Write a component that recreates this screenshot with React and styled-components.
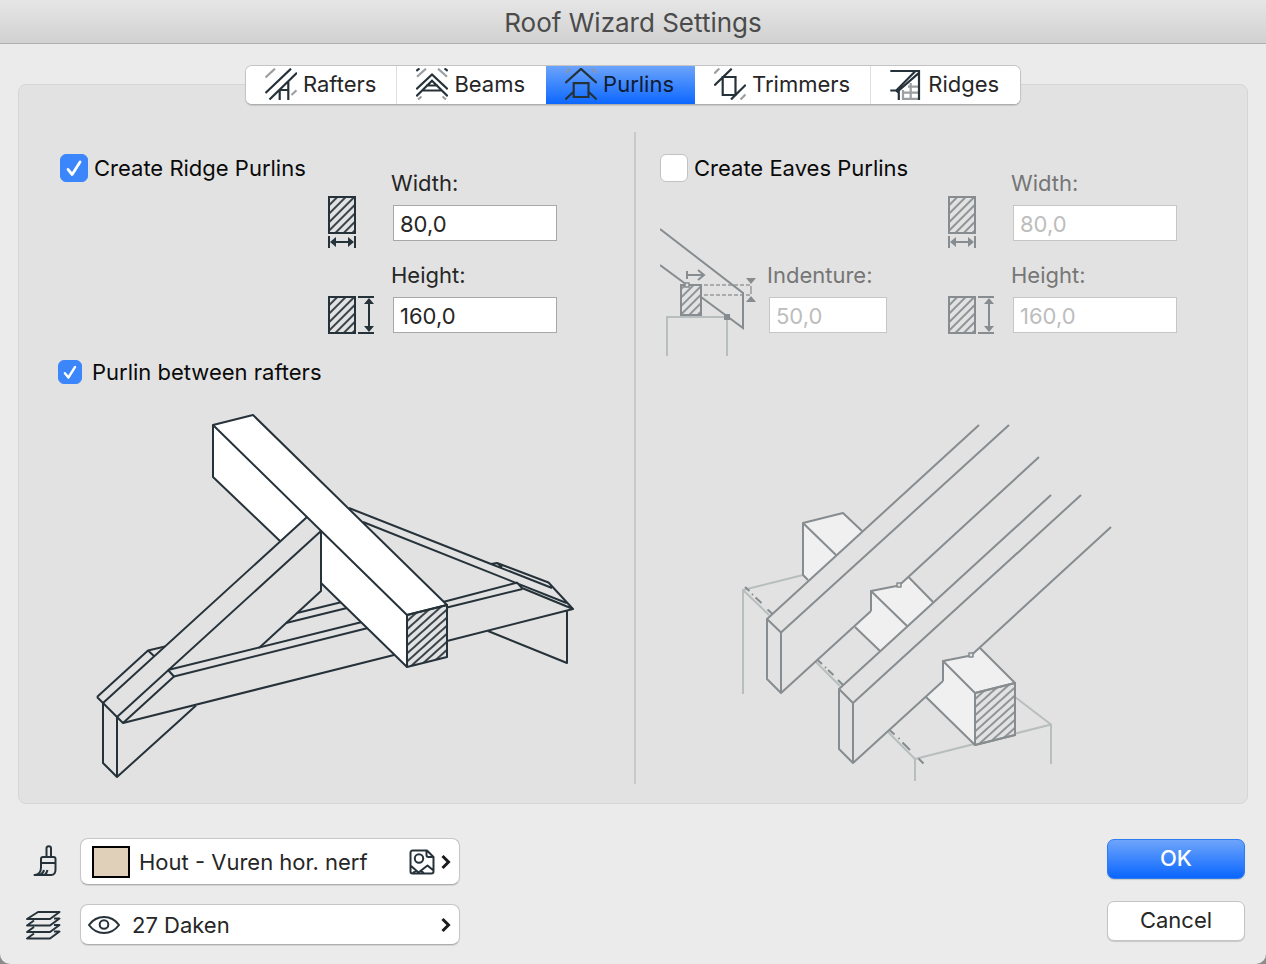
import React, { useState } from "react";
import styled, { createGlobalStyle } from "styled-components";

const INK = "#26323a";
const MUTED = "#868c8f";
const FAINT = "#b8bebe";
const PANEL = "#e2e2e2";
const PALE = "#f0f0f0";

const GlobalStyle = createGlobalStyle`
  * {
    box-sizing: border-box;
  }
  body {
    margin: 0;
    background: #8c8c8c;
    font-family: Inter, "Liberation Sans", sans-serif;
    font-size: 22px;
    line-height: 28px;
    color: #262626;
  }
  button, input {
    font: inherit;
    color: inherit;
    margin: 0;
  }
  svg {
    display: block;
    flex: none;
  }
`;

const Window = styled.div`
  min-height: 100vh;
  display: flex;
  flex-direction: column;
  background: #ebebeb;
  border-radius: 0 0 10px 10px;
`;

const TitleBar = styled.header`
  height: 44px;
  display: flex;
  align-items: center;
  justify-content: center;
  background: linear-gradient(#e6e6e6, #d1d1d1);
  border-bottom: 1px solid #b0b0b0;
`;

const Title = styled.h1`
  margin: 0;
  padding-top: 2px;
  font-size: 26px;
  font-weight: 400;
  color: #4b4b4b;
`;

const Main = styled.main`
  flex: 1;
  display: flex;
  flex-direction: column;
  padding: 21px 18px 0;
`;

const TabList = styled.div`
  position: relative;
  z-index: 1;
  align-self: center;
  display: flex;
  height: 40px;
  margin-bottom: -21px;
  overflow: hidden;
  background: #fff;
  border: 1px solid #c4c4c4;
  border-bottom-color: #adadad;
  border-radius: 7px;
  box-shadow: 0 1px 1px rgba(0, 0, 0, 0.12);
`;

const Tab = styled.button`
  display: flex;
  align-items: center;
  gap: 6px;
  height: 40px;
  margin-top: -1px;
  padding: 0 20px 2px 19px;
  border: 0;
  border-right: 1px solid ${(p) => (p.$divider ? "#dedede" : "transparent")};
  background: ${(p) => (p.$active ? "linear-gradient(#6ea5fb, #0a66ff)" : "#fff")};
  color: ${(p) => (p.$active ? "#101c33" : "#262626")};
`;

const Panel = styled.div`
  display: grid;
  grid-template-columns: 1fr 1fr;
  padding: 47px 0 19px 2px;
  background: ${PANEL};
  border: 1px solid #d6d6d6;
  border-radius: 8px;
`;

const Section = styled.section`
  padding: 22px 0 0 ${(p) => (p.$divided ? 22 : 37)}px;
  border-left: ${(p) => (p.$divided ? "2px solid #c9c9c9" : "0")};
`;

const SectionTop = styled.div`
  display: flex;
`;

const Lead = styled.div`
  width: ${(p) => p.$width}px;
  flex: none;
  padding-left: 2px;
`;

const CheckLabel = styled.label`
  display: flex;
  align-items: center;
  gap: ${(p) => (p.$small ? 10 : 6)}px;
  height: ${(p) => (p.$small ? 24 : 28)}px;
  margin-top: ${(p) => (p.$small ? 25 : 0)}px;
  color: #0a0a0a;
  white-space: nowrap;
`;

const CheckBox = styled.input`
  appearance: none;
  width: ${(p) => (p.$small ? 24 : 28)}px;
  height: ${(p) => (p.$small ? 24 : 28)}px;
  flex: none;
  border: 1px solid #c2c2c2;
  border-radius: 6px;
  background: #fff;

  &:checked {
    border-color: #3b86fb;
    background: #3b86fb
      url("data:image/svg+xml,%3Csvg xmlns='http://www.w3.org/2000/svg' viewBox='0 0 28 28'%3E%3Cpath d='M7.5 15.5l4.5 5.5 8.5-13.5' fill='none' stroke='white' stroke-width='3' stroke-linecap='round' stroke-linejoin='round'/%3E%3C/svg%3E")
      center / 100% no-repeat;
  }
`;

const IconColumn = styled.div`
  display: flex;
  flex-direction: column;
  gap: 46px;
  width: 63px;
  padding-top: 41px;
`;

const Fields = styled.div`
  display: flex;
  flex-direction: column;
  gap: 20px;
  padding-top: 15px;
`;

const Field = styled.label`
  display: flex;
  flex-direction: column;
  gap: 8px;
  color: ${(p) => (p.$disabled ? "#767676" : "#262626")};
`;

const TextBox = styled.input`
  width: ${(p) => p.$width || 164}px;
  height: 36px;
  margin-left: 2px;
  padding: 2px 6px 0;
  border: 1px solid #a8a8a8;
  border-radius: 0;
  background: #fff;

  &:disabled {
    border-color: #c6c6c6;
    color: #bdbdbd;
  }
`;

const IndentRow = styled.div`
  display: flex;
  gap: 9px;
  padding-top: 46px;
`;

const IndentField = styled.div`
  padding-top: 33px;
`;

const Illustration = styled.div`
  padding: ${(p) => p.$top}px 0 0 ${(p) => p.$left}px;
`;

const Footer = styled.footer`
  display: flex;
  justify-content: space-between;
  align-items: flex-start;
  padding: 34px 21px 19px 24px;
`;

const Attributes = styled.div`
  display: flex;
  flex-direction: column;
  gap: 19px;
`;

const AttributeRow = styled.div`
  display: flex;
  align-items: center;
  gap: 18px;
`;

const Popup = styled.button`
  display: flex;
  align-items: center;
  gap: ${(p) => (p.$tall ? 9 : 12)}px;
  width: 380px;
  height: ${(p) => (p.$tall ? 47 : 41)}px;
  padding: 0 8px 0 ${(p) => (p.$tall ? 11 : 7)}px;
  border: 1px solid #c6c6c6;
  border-bottom-color: #adadad;
  border-radius: 8px;
  background: #fff;
  box-shadow: 0 1px 1px rgba(0, 0, 0, 0.1);
  text-align: left;
`;

const PopupText = styled.span`
  flex: 1;
`;

const PopupEnd = styled.span`
  display: flex;
  align-items: center;
  gap: 6px;
`;

const Swatch = styled.span`
  width: 38px;
  height: 32px;
  border: 2px solid #000;
  background: #e0d0ba;
`;

const Actions = styled.div`
  display: flex;
  flex-direction: column;
  gap: 22px;
  padding-top: 1px;
`;

const ActionButton = styled.button`
  width: 138px;
  height: 40px;
  padding: 0 0 2px;
  border: 1px solid ${(p) => (p.$primary ? "#2f7bf0" : "#c4c4c4")};
  border-radius: 7px;
  background: ${(p) => (p.$primary ? "linear-gradient(#6ea5fb, #0a66ff)" : "#fff")};
  color: ${(p) => (p.$primary ? "#fff" : "#262626")};
  font-weight: ${(p) => (p.$primary ? 500 : 400)};
  box-shadow: 0 1px 1px rgba(0, 0, 0, 0.15);
`;

function TabIcon({ children }) {
  return (
    <svg width="32" height="32" viewBox="0 0 32 32" fill="none" stroke={INK} strokeWidth="2.2" aria-hidden="true">
      {children}
    </svg>
  );
}

const tabs = [
  {
    name: "Rafters",
    icon: (
      <TabIcon>
        <path stroke="#9b9fa2" d="M.5 9.5L10 .7M26.5 27l5-4.8" />
        <path d="M.5 25L26 .7M4.5 31.5L32 4.7M14.7 21v11M23.3 13v19M14 22h9.5" />
      </TabIcon>
    ),
  },
  {
    name: "Beams",
    icon: (
      <TabIcon>
        <path stroke="#9b9fa2" d="M1 8.7l9-8M31 8.7l-9-8M2 31.5l3.5-3M30 31.5l-3.5-3" />
        <path d="M.3 3L3.5.5M31.7 3L28.5.5M.3 21.3L16 6.5l15.7 14.8M.3 28.3L16 12.8l15.7 15.5M10 17.5h12M5.5 22.5h21" />
      </TabIcon>
    ),
  },
  {
    name: "Purlins",
    icon: (
      <TabIcon>
        <path stroke="#8794ab" d="M.3 5l5-4.5M31.7 5l-5-4.5" />
        <path d="M.3 15L16 .9 31.7 15M8.7 15.2h14.8V29H8.7zM.3 31.5l8-7.5M31.7 31.5l-8-7.5" />
      </TabIcon>
    ),
  },
  {
    name: "Trimmers",
    icon: (
      <TabIcon>
        <path stroke="#9b9fa2" d="M.3 5.5l5-5M26.5 31.5l5-5" />
        <path d="M.3 17.5L17.7.7M8.7 9h12.8v18H8.7zM17 31.5l14.8-14.8" />
      </TabIcon>
    ),
  },
  {
    name: "Ridges",
    icon: (
      <TabIcon>
        <path stroke="#9b9fa2" d="M13 22v9M20.7 15v16M18 18.7h11M13 24.7h16M12 30.8h17" />
        <path d="M.3 3H29v29M.3 22.5h6L25.5 3M8.8 32v-9.5L29 4.8M6 22.5l3 2.5" />
      </TabIcon>
    ),
  },
];

function Hatch({ id, color, angle = 48 }) {
  return (
    <pattern id={id} width="6" height="6" patternUnits="userSpaceOnUse" patternTransform={`rotate(${angle})`}>
      <path d="M2 0V6" stroke={color} strokeWidth="1.8" />
    </pattern>
  );
}

function WidthIcon({ id, color }) {
  return (
    <svg width="46" height="54" viewBox="0 0 46 54" fill="none" stroke={color} strokeWidth="2" aria-hidden="true">
      <defs>
        <Hatch id={id} color={color} angle={45} />
      </defs>
      <path d="M1 2h26v36H1z" fill={`url(#${id})`} />
      <path d="M1 41v12M27 41v12M4 47h20" />
      <path d="M2 47l6-5v10zM26 47l-6-5v10z" fill={color} stroke="none" />
    </svg>
  );
}

function HeightIcon({ id, color }) {
  return (
    <svg width="46" height="40" viewBox="0 0 46 40" fill="none" stroke={color} strokeWidth="2" aria-hidden="true">
      <defs>
        <Hatch id={id} color={color} angle={45} />
      </defs>
      <path d="M1 2h26v36H1z" fill={`url(#${id})`} />
      <path d="M30 2h16M30 38h16M41 5v30" />
      <path d="M41 3l5 6H36zM41 37l5-6H36z" fill={color} stroke="none" />
    </svg>
  );
}

function Measures({ prefix, disabled }) {
  const color = disabled ? MUTED : INK;
  return (
    <>
      <IconColumn>
        <WidthIcon id={`${prefix}-width-hatch`} color={color} />
        <HeightIcon id={`${prefix}-height-hatch`} color={color} />
      </IconColumn>
      <Fields>
        <Field $disabled={disabled}>
          Width:
          <TextBox type="text" defaultValue="80,0" disabled={disabled} />
        </Field>
        <Field $disabled={disabled}>
          Height:
          <TextBox type="text" defaultValue="160,0" disabled={disabled} />
        </Field>
      </Fields>
    </>
  );
}

function IndentureDrawing() {
  return (
    <svg width="98" height="130" viewBox="660 228 98 130" fill="none" stroke={MUTED} strokeWidth="2" aria-hidden="true">
      <defs>
        <Hatch id="indent-hatch" color={MUTED} angle={45} />
      </defs>
      <path stroke={FAINT} d="M667 356v-39h60v39" />
      <path stroke="#ababab" strokeDasharray="4 2" d="M704 285h47M704 295h47" />
      <path stroke="#ababab" d="M751 286v8" />
      <path d="M660 229l83 64v35l-42-31M660 265l27 20" />
      <path d="M681 285h20v30h-20z" fill="url(#indent-hatch)" />
      <path d="M687 271v8M687 275h16M698 270l6 5-6 5" />
      <path d="M685 283h4v4h-4z" fill={PANEL} strokeWidth="1.5" />
      <path d="M746 278h10l-5 6zM746 302h10l-5-6zM724 314h6v6h-6z" fill={MUTED} stroke="none" />
    </svg>
  );
}

function RidgeDrawing() {
  return (
    <svg
      width="484"
      height="374"
      viewBox="94 410 484 374"
      fill="none"
      stroke={INK}
      strokeWidth="2"
      strokeLinejoin="round"
      role="img"
      aria-label="Ridge purlin between rafters"
    >
      <defs>
        <Hatch id="ridge-hatch" color={INK} />
      </defs>
      {/* right rafter and its collar */}
      <path d="M349 508l142 56 61 24M363 522l203.5 81M491 564l6-1 51.500 19.500L573 609l-51-21-5-5.500M497 563l5 4" />
      <path d="M443 602l74.500-19.500M447 607.500l75.500-18.500M447 641l126-32M567 611v52l-79-32" />
      {/* collar beams on the left */}
      <path d="M297 613l45-11M286 623l61-15M168 670l194-48M174 676.500l194-48.500M123 723l271-68" />
      {/* purlin */}
      <path fill="#fff" stroke="none" d="M213 425l94 92-27 24-67-64zM321 531l86 84v52l-86-84z" />
      <path fill="#fff" d="M213 425l40-10 194 190-40 10z" />
      <path d="M280 541l-67-64v-52M321 583l86 84" />
      <path d="M407 615l40-10v52l-40 10z" fill="url(#ridge-hatch)" />
      {/* left rafter */}
      <path d="M307 517L103 703v60l14 14v-60l204-186v60l-62 57M117 777l62-56 17-15.500" />
      <path d="M97 697l26 26 51-46.500-6-6.500M97 697l51-46.500 6.500 6M148 650.500l17-4" />
    </svg>
  );
}

function EavesDrawing() {
  return (
    <svg
      width="374"
      height="362"
      viewBox="740 422 374 362"
      fill="none"
      stroke={MUTED}
      strokeWidth="2"
      strokeLinejoin="round"
      role="img"
      aria-label="Eaves purlins under rafters"
    >
      <defs>
        <Hatch id="eaves-hatch" color={MUTED} />
      </defs>
      {/* wall */}
      <path stroke={FAINT} d="M803 575l-60 15v104M743 590l26 25M816 662l24 24M888 732l27 27v22M915 759l136-34.500V764M1051 724.500L1015 697" />
      <path d="M745 587l4.500 4M755.500 597.500l6 5.500M767.500 609.500l4.500 4M817.500 660l4.500 4M828 670l5.500 5M838 680l5 5M889.500 730l5 4.500M902.500 742.500L910 750M918.500 758.500l5 5" />
      <path d="M752 594l1 1M825 667l1 1M898.500 738l1 1" />
      {/* purlin pieces */}
      <path fill={PALE} stroke="none" d="M803 523l40-10 19 18-54 49-5-5zM871 591l28-6 9-8 25 25-53 49-25-24 16-16zM943 661l28-6 9-8 35 36-40 10v52l-49-48 17-17z" />
      <path d="M808 580l-5-5v-52l40-10 19 18M803 523l33 32" />
      <path d="M871 611v-20l28-5.500M871 591l36 35M855 627l25 24M908.500 577l24.500 25" />
      <path d="M943 681v-20l28-5.500M943 661l32 32M926 697l49 48M979.500 647.500L1015 683" />
      <path d="M975 693l40-10v52l-40 10z" fill={PANEL} />
      <path d="M975 693l40-10v52l-40 10z" fill="url(#eaves-hatch)" />
      {/* rafters */}
      <path d="M979 425L767 619v60l14 14v-60.500L1009 425M767 619l14 13.500M781 693l90-82M899 585.500L1039 457" />
      <path d="M1051 495L839 689v60l14 14v-60l228-208M839 689l14 14M853 763l90-82M971 655.500L1111 527" />
      <path fill={PANEL} strokeWidth="1.5" d="M897 583h4v4h-4zM969 653h4v4h-4z" />
    </svg>
  );
}

function BrushIcon() {
  return (
    <svg width="38" height="38" viewBox="24 843 38 38" fill="none" stroke={INK} strokeWidth="2" strokeLinejoin="round" aria-hidden="true">
      <path d="M46.500 857v-8.500a2.200 2.200 0 0 1 4.500 0v8.500M41 863v-4a2 2 0 0 1 2-2h10.500a2 2 0 0 1 2 2v4zM41 863v4.500c0 4-2 7.500-6.500 7.500H51c3 0 4.500-2.500 4.500-5.500V863M40 875c2-1 3.500-2.500 4-5M44.500 875c1.500-1 2.500-2.500 3-5" />
    </svg>
  );
}

function LayersIcon() {
  return (
    <svg width="38" height="32" viewBox="24 910 38 32" fill="none" stroke={INK} strokeWidth="2" strokeLinejoin="round" aria-hidden="true">
      <path d="M27 920l11-7h21.500l-9.500 7zM34 921.500l-7 5h23l9.500-7H54M34 928l-7 5h23l9.500-7H54M34 934.500l-7 5h23l9.500-7H54" />
    </svg>
  );
}

function PictureIcon() {
  return (
    <svg width="26" height="26" viewBox="0 0 26 26" fill="none" stroke={INK} strokeWidth="2" strokeLinejoin="round" aria-hidden="true">
      <path d="M18 1.500H3.500a2 2 0 0 0-2 2v19a2 2 0 0 0 2 2h19a2 2 0 0 0 2-2V8zM17.500 1.500V6a2 2 0 0 0 2 2h5M1.500 16.500l8 7 9-7 6 5M7 21.500l-3 2.500M12 21.500l3 3" />
      <circle cx="10" cy="9.500" r="4.200" />
    </svg>
  );
}

function EyeIcon() {
  return (
    <svg width="32" height="20" viewBox="0 0 32 20" fill="none" stroke={INK} strokeWidth="2" aria-hidden="true">
      <path d="M1 10C5 4.500 10 2 16 2s11 2.500 15 8c-4 5.500-9 8-15 8S5 15.500 1 10z" />
      <circle cx="16" cy="9.500" r="4.300" />
    </svg>
  );
}

function Chevron() {
  return (
    <svg width="10" height="16" viewBox="0 0 10 16" fill="none" stroke="#1c1c1c" strokeWidth="3" aria-hidden="true">
      <path d="M1.500 2L7.500 8l-6 6" />
    </svg>
  );
}

function App() {
  const [active, setActive] = useState("Purlins");

  return (
    <>
      <GlobalStyle />
      <Window>
        <TitleBar>
          <Title>Roof Wizard Settings</Title>
        </TitleBar>
        <Main>
          <TabList role="tablist">
            {tabs.map((tab, i) => (
              <Tab
                key={tab.name}
                type="button"
                role="tab"
                aria-selected={tab.name === active}
                $active={tab.name === active}
                $divider={i === 0 || i === 3}
                onClick={() => setActive(tab.name)}
              >
                {tab.icon}
                {tab.name}
              </Tab>
            ))}
          </TabList>
          <Panel role="tabpanel">
            <Section>
              <SectionTop>
                <Lead $width={270}>
                  <CheckLabel>
                    <CheckBox type="checkbox" defaultChecked />
                    Create Ridge Purlins
                  </CheckLabel>
                </Lead>
                <Measures prefix="ridge" />
              </SectionTop>
              <CheckLabel $small>
                <CheckBox type="checkbox" $small defaultChecked />
                Purlin between rafters
              </CheckLabel>
              <Illustration $top={26} $left={36}>
                <RidgeDrawing />
              </Illustration>
            </Section>
            <Section $divided>
              <SectionTop>
                <Lead $width={290}>
                  <CheckLabel>
                    <CheckBox type="checkbox" />
                    Create Eaves Purlins
                  </CheckLabel>
                  <IndentRow>
                    <IndentureDrawing />
                    <IndentField>
                      <Field $disabled>
                        Indenture:
                        <TextBox type="text" defaultValue="50,0" $width={118} disabled />
                      </Field>
                    </IndentField>
                  </IndentRow>
                </Lead>
                <Measures prefix="eaves" disabled />
              </SectionTop>
              <Illustration $top={64} $left={82}>
                <EavesDrawing />
              </Illustration>
            </Section>
          </Panel>
        </Main>
        <Footer>
          <Attributes>
            <AttributeRow>
              <BrushIcon />
              <Popup type="button" $tall>
                <Swatch />
                <PopupText>Hout - Vuren hor. nerf</PopupText>
                <PopupEnd>
                  <PictureIcon />
                  <Chevron />
                </PopupEnd>
              </Popup>
            </AttributeRow>
            <AttributeRow>
              <LayersIcon />
              <Popup type="button">
                <EyeIcon />
                <PopupText>27 Daken</PopupText>
                <Chevron />
              </Popup>
            </AttributeRow>
          </Attributes>
          <Actions>
            <ActionButton type="button" $primary>
              OK
            </ActionButton>
            <ActionButton type="button">Cancel</ActionButton>
          </Actions>
        </Footer>
      </Window>
    </>
  );
}

export default App;
